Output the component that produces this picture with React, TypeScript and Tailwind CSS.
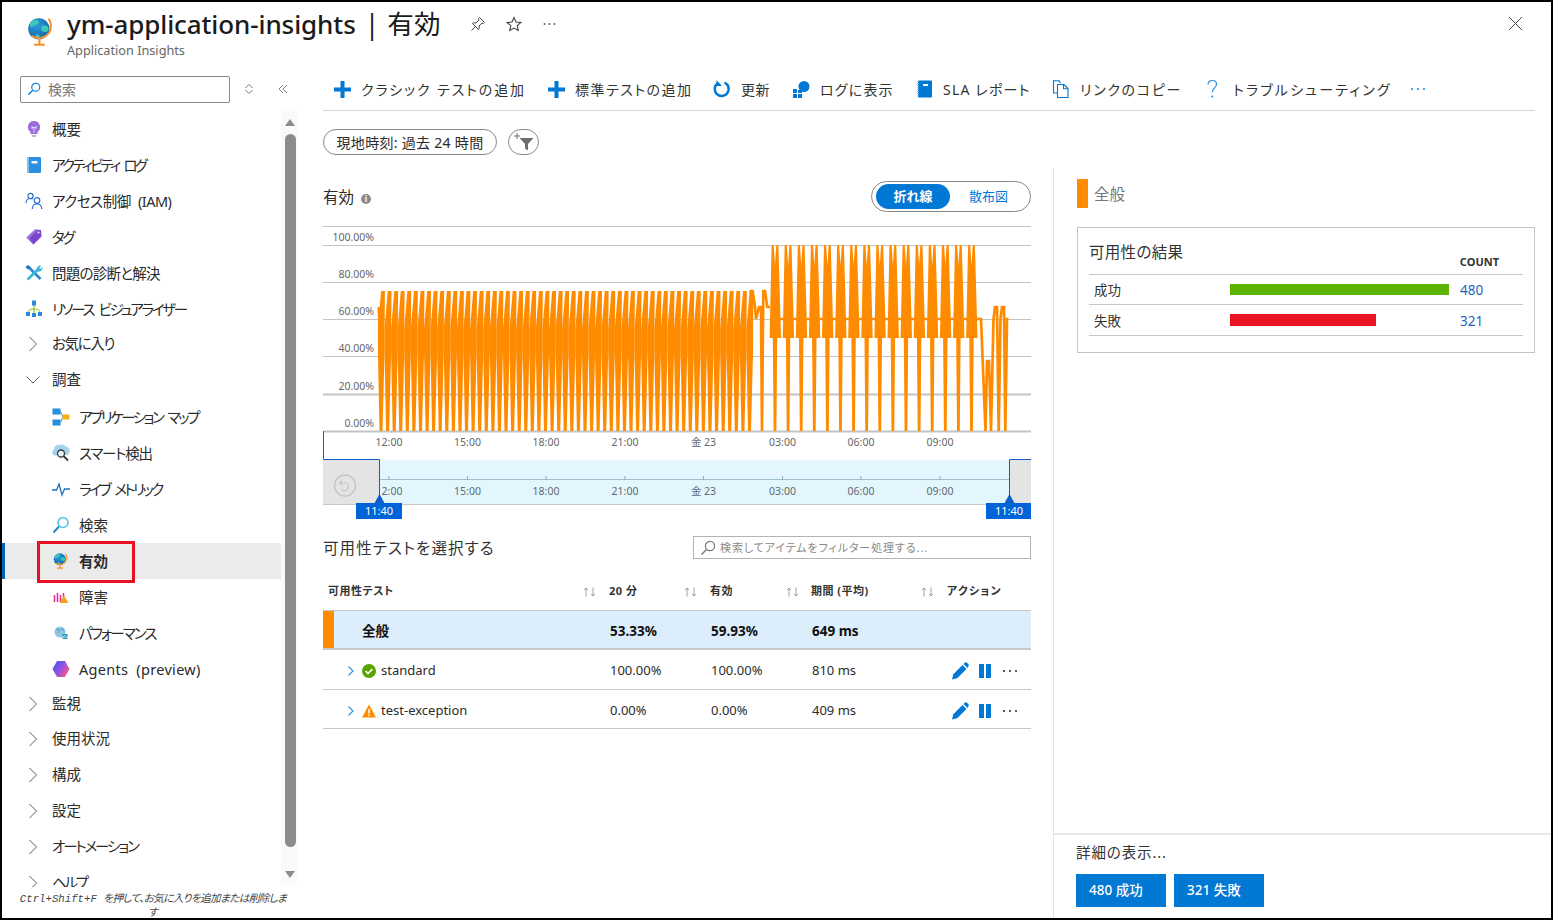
import React from "react";

const Svg = ({ s = 16, w, h, vb = "0 0 16 16", className = "", children }: any) => (
  <svg width={w ?? s} height={h ?? s} viewBox={vb} className={`shrink-0 ${className}`} fill="none">
    {children}
  </svg>
);

const Globe = ({ s = 30, id }: { s?: number; id: string }) => (
  <Svg s={s} vb="0 0 30 30">
    <defs>
      <radialGradient id={id} cx="0.4" cy="0.35" r="0.75">
        <stop offset="0" stopColor="#2a9be0" />
        <stop offset="1" stopColor="#135f9e" />
      </radialGradient>
    </defs>
    <circle cx="13" cy="12" r="10" fill={`url(#${id})`} />
    <path d="M6 5c3-2 6-2 7 0s-2 3-4 4-3 3-4 1 0-4 1-5zM17 9c2-1 4 0 5 2s-1 4-3 4-4-1-4-3 1-3 2-3zM11 17c2 0 3 1 3 3s-2 2-3 1-2-4 0-4z" fill="#39c9b8" />
    <path d="M22 2.500c3.500 4.500 3 11-1 15-4 3.800-10 4.200-14.500 1.300" stroke="#f7902a" strokeWidth="1.800" />
    <path d="M13.500 22v4M8.500 27h10" stroke="#f7902a" strokeWidth="2" />
  </Svg>
);

const Chevron = ({ down = false }: { down?: boolean }) => (
  <Svg s={16} className="text-[#5c5c5c]">
    {down ? (
      <path d="M1.500 4.500 8 11l6.500-6.500" stroke="currentColor" strokeWidth="1" />
    ) : (
      <path d="M4.500 1 11.500 8l-7 7" stroke="currentColor" strokeWidth="1" />
    )}
  </Svg>
);

const SearchIco = ({ color = "#0078d4", s = 14 }: { color?: string; s?: number }) => (
  <Svg s={s}>
    <circle cx="10" cy="6" r="4.600" stroke={color} strokeWidth="1.200" />
    <path d="M6.500 9.500 1.500 14.500" stroke={color} strokeWidth="1.500" />
  </Svg>
);

const icons: Record<string, React.ReactNode> = {
  bulb: (
    <Svg s={18} vb="0 0 18 18">
      <path d="M9 1a6 6 0 0 1 3.500 10.900V14h-7v-2.100A6 6 0 0 1 9 1z" fill="#9a6ce0" />
      <path d="M7 6v3M11 6v3M7 7.500h4M9 7.500V13" stroke="#e6dcf8" strokeWidth="0.900" />
      <path d="M6.500 15h5l-1 2h-3z" fill="#b6b6bc" />
    </Svg>
  ),
  book: (
    <Svg s={18} vb="0 0 18 18">
      <rect x="2" y="1" width="14" height="16" rx="1" fill="#2d8fdf" />
      <rect x="2" y="1" width="2" height="16" fill="#7cc0f2" />
      <rect x="6.500" y="5" width="6" height="2.500" fill="#f2f8fd" />
    </Svg>
  ),
  users: (
    <Svg s={18} vb="0 0 18 18">
      <circle cx="5.500" cy="4" r="2.600" stroke="#2a6fd0" strokeWidth="1.200" />
      <path d="M1 11c0-3 2-4.500 4.500-4.500 1 0 1.700.2 2.300.6" stroke="#2a6fd0" strokeWidth="1.200" />
      <circle cx="12" cy="8.500" r="2.800" stroke="#2a6fd0" strokeWidth="1.200" />
      <path d="M7.300 17c0-3 2-5 4.700-5s4.700 2 4.700 5" stroke="#2a6fd0" strokeWidth="1.200" />
    </Svg>
  ),
  tag: (
    <Svg s={18} vb="0 0 18 18">
      <path d="M1.500 9.500 10 1.500l6 .5.500 6.500-8 8z" fill="#7b45c9" />
      <path d="M1.500 9.500 10 1.500l3 .2-8.500 8.500 4 6.300z" fill="#9b73de" />
      <circle cx="13.500" cy="4.500" r="1.100" fill="#e9def8" />
    </Svg>
  ),
  tools: (
    <Svg s={18} vb="0 0 18 18">
      <path d="M3 2.500 15.500 15" stroke="#2f87d8" strokeWidth="2.600" />
      <path d="M1.500 1.500l2.500 0 1 3-1.500 1-2.500-1.500z" fill="#1f6fc0" />
      <path d="M13 5.500 2.500 15.500" stroke="#35b6d8" strokeWidth="2.600" />
      <path d="M11.500 5.500c0-2.500 2-4.500 5-4l-2.300 2.300 1 1.200 2.300-2c.4 3-1.800 5-4.500 4.500z" fill="#35b6d8" />
    </Svg>
  ),
  res: (
    <Svg s={18} vb="0 0 18 18">
      <path d="M9 5v4M3 13c0-3 2-4 6-4s6 1 6 4M9 9v5" stroke="#7fba00" strokeWidth="1" />
      <rect x="7" y="0.500" width="4" height="5" fill="#2f87d8" />
      <rect x="1" y="12" width="4" height="4" fill="#2f87d8" />
      <rect x="7" y="13" width="4" height="4" fill="#2f87d8" />
      <rect x="13" y="12" width="4" height="4" fill="#2f87d8" />
    </Svg>
  ),
  map: (
    <Svg s={18} vb="0 0 18 18">
      <rect x="0.500" y="0.500" width="8" height="6" fill="#2392dc" />
      <rect x="0.500" y="11.500" width="8" height="6" fill="#2392dc" />
      <path d="M8.500 3.500 11 9l-2.500 5.500" stroke="#2392dc" strokeWidth="1" />
      <rect x="10.500" y="6.500" width="7" height="5" fill="#fab10f" />
    </Svg>
  ),
  smart: (
    <Svg s={18} vb="0 0 18 18">
      <path d="M3 11.500c-3.500 0-3.500-5-1-6 0-3.500 3-5.500 6-4.500 2-1 5 0 6.500 2 3.500 0 4.500 6 1 8z" fill="#a5d3ea" />
      <circle cx="9" cy="9.500" r="3.500" fill="#e8f4fa" stroke="#3a3a3a" strokeWidth="1.300" />
      <path d="M11.500 12 16 16.500" stroke="#3a3a3a" strokeWidth="1.800" />
    </Svg>
  ),
  live: (
    <Svg s={18} vb="0 0 18 18">
      <path d="M0 10h4.500L7 4l3 11 2.500-6H18" stroke="#1f70b8" strokeWidth="1.300" />
    </Svg>
  ),
  find: (
    <Svg s={18} vb="0 0 18 18">
      <circle cx="11" cy="6.500" r="5" stroke="#4fc3e8" strokeWidth="1.500" />
      <path d="M7 10.500 1.500 16.500" stroke="#1f8ac0" strokeWidth="1.900" />
    </Svg>
  ),
  fail: (
    <Svg s={16}>
      <path d="M1.500 6v7M4.500 4v9M7.500 6v7M10.500 4v4" stroke="#e6298f" strokeWidth="1.500" />
      <path d="M11 6.500 15.500 14h-9z" fill="#f7a11a" />
    </Svg>
  ),
  perf: (
    <Svg s={16}>
      <circle cx="7" cy="7" r="5.500" fill="#8fc7e3" />
      <path d="M3.500 4.500c2-1 3 0 3 1s-2 1-2 2.500M8 4c2 0 3 1 3 2" stroke="#3b8fc0" strokeWidth="1" />
      <rect x="9.500" y="9" width="5" height="5" fill="#2b97b8" />
      <path d="M10.500 13V11M12 13V10M13.500 13v-1.500" stroke="#cfeaf2" strokeWidth="0.800" />
    </Svg>
  ),
  agents: (
    <Svg s={18} vb="0 0 18 18">
      <defs>
        <linearGradient id="ag" x1="0" y1="0" x2="1" y2="0.700">
          <stop offset="0" stopColor="#3a5be8" />
          <stop offset="0.500" stopColor="#8a52e8" />
          <stop offset="1" stopColor="#ff5a8a" />
        </linearGradient>
      </defs>
      <path d="M5 1h8l4.500 8-4.500 8H5L.500 9z" fill="url(#ag)" />
    </Svg>
  ),
};

type Item = { t: string; icon?: string; chev?: "r" | "d"; child?: boolean; h?: string; sel?: boolean; tr?: string };
const items: Item[] = [
  { t: "概要", icon: "bulb" },
  { t: "アクティビティ ログ", icon: "book", tr: "tracking-[-2.8px]" },
  { t: "アクセス制御 (IAM)", icon: "users", tr: "tracking-[-0.5px]" },
  { t: "タグ", icon: "tag", tr: "tracking-[-2.5px]" },
  { t: "問題の診断と解決", icon: "tools", tr: "tracking-[-0.75px]" },
  { t: "リソース ビジュアライザー", icon: "res", tr: "tracking-[-2.3px]" },
  { t: "お気に入り", chev: "r", h: "h-[34px]", tr: "tracking-[-1.4px]" },
  { t: "調査", chev: "d", h: "h-[38px]" },
  { t: "アプリケーション マップ", icon: "map", child: true, tr: "tracking-[-2.5px]" },
  { t: "スマート検出", icon: "smart", child: true, tr: "tracking-[-1.2px]" },
  { t: "ライブ メトリック", icon: "live", child: true, tr: "tracking-[-2.6px]" },
  { t: "検索", icon: "find", child: true },
  { t: "有効", icon: "globe", child: true, sel: true },
  { t: "障害", icon: "fail", child: true },
  { t: "パフォーマンス", icon: "perf", child: true, tr: "tracking-[-1.9px]" },
  { t: "Agents (preview)", icon: "agents", child: true, tr: "tracking-[0.3px]" },
  { t: "監視", chev: "r", h: "h-[34px]" },
  { t: "使用状況", chev: "r" },
  { t: "構成", chev: "r" },
  { t: "設定", chev: "r" },
  { t: "オートメーション", chev: "r", tr: "tracking-[-2.1px]" },
  { t: "ヘルプ", chev: "r", tr: "tracking-[-2.3px]" },
];

const SideRow = ({ it }: { it: Item }) => (
  <div
    className={`relative flex items-center shrink-0 ${it.h ?? "h-[36px]"} ${it.child ? "pl-[50px]" : "pl-[23px]"} ${it.sel ? "bg-[#ebebeb]" : ""}`}
  >
    {it.sel && <div className="absolute left-0 top-0 bottom-0 w-[3px] bg-[#0063b1]" />}
    {it.sel && <div className="absolute left-[35px] top-[-2px] w-[98px] h-[42px] border-[3px] border-[#e81123]" />}
    <span className={`flex justify-center ${it.chev ? "w-[16px] mr-[11px]" : "w-[18px] mr-[9px]"}`}>
      {it.chev ? <Chevron down={it.chev === "d"} /> : it.icon === "globe" ? <Globe s={18} id="gl2" /> : it.icon ? icons[it.icon] : null}
    </span>
    <span className={`${it.chev ? "" : "mt-[1px]"} text-[14.5px] text-[#2a2a2a] whitespace-nowrap [word-spacing:4px] ${it.sel ? "font-bold" : ""} ${it.tr ?? ""}`}>{it.t}</span>
  </div>
);

const Plus = () => (
  <Svg s={19} vb="0 0 19 19">
    <path d="M9.500 1v17M1 9.500h17" stroke="#0078d4" strokeWidth="4" />
  </Svg>
);

const toolbar = [
  { w: "w-[224px]", t: "クラシック テストの追加", gap: "gap-[9px]", tr: "tracking-[1.9px]", i: <Plus />, pl: "pl-[10px]" },
  { w: "w-[166px]", t: "標準テストの追加", gap: "gap-[9px]", tr: "tracking-[1.5px]", i: <Plus /> },
  {
    w: "w-[79px]",
    t: "更新",
    gap: "gap-[10px]",
    tr: "tracking-[0.5px]",
    i: (
      <Svg s={18} vb="0 0 18 18">
        <path d="M11.500 2.600a7 7 0 1 1-6.500.5" stroke="#0078d4" strokeWidth="2.500" />
        <path d="M3.500 0v6H9z" fill="#0078d4" />
      </Svg>
    ),
  },
  {
    w: "w-[124px]",
    t: "ログに表示",
    gap: "gap-[10px]",
    tr: "tracking-[1.2px]",
    i: (
      <Svg s={18} vb="0 0 18 18">
        <circle cx="12" cy="6.500" r="5.500" fill="#0078d4" />
        <rect x="1" y="9" width="4" height="4" fill="#0078d4" />
        <rect x="6" y="10" width="4" height="3" fill="#0078d4" />
        <rect x="1" y="14" width="4" height="4" fill="#0078d4" />
        <rect x="6" y="14" width="4" height="4" fill="#0078d4" />
      </Svg>
    ),
  },
  {
    w: "w-[136px]",
    t: "SLA レポート",
    gap: "gap-[9px]",
    tr: "tracking-[1.2px]",
    i: (
      <Svg s={18} vb="0 0 18 18">
        <rect x="2" y="0.500" width="14" height="17" rx="1" fill="#0078d4" />
        <path d="M2 1v16" stroke="#7cc0f2" strokeWidth="1.500" strokeDasharray="1 1" />
        <rect x="7" y="4" width="5" height="2" fill="#fff" />
      </Svg>
    ),
  },
  {
    w: "w-[151px]",
    t: "リンクのコピー",
    gap: "gap-[10px]",
    tr: "tracking-[1.7px]",
    i: (
      <Svg s={18} vb="0 0 18 18">
        <path d="M6 13H1.500V.800H7l1.500 2" stroke="#0078d4" strokeWidth="1.100" />
        <path d="M5.500 4.500H12l4 4V17.500H5.500z" stroke="#0078d4" strokeWidth="1.100" fill="#fff" />
        <path d="M11.500 4.500v4.300H16" stroke="#0078d4" strokeWidth="1.100" />
      </Svg>
    ),
  },
  {
    w: "w-[206px]",
    t: "トラブルシューティング",
    gap: "gap-[12px]",
    tr: "tracking-[2.2px]",
    i: (
      <Svg w={18} h={20} vb="0 0 18 20">
        <path d="M5 5.500C5 3 7 1.500 9.300 1.500c2.400 0 4.200 1.600 4.200 3.800 0 3.700-4.300 4-4.300 8" stroke="#2b8fe0" strokeWidth="1.200" />
        <circle cx="9.200" cy="17.500" r="1" fill="#2b8fe0" />
      </Svg>
    ),
  },
];

const Dots = ({ c = "#444", w = 18 }: { c?: string; w?: number }) => (
  <Svg w={w} h={6} vb="0 0 18 6">
    <circle cx="3" cy="3" r="1.100" fill={c} />
    <circle cx="9" cy="3" r="1.100" fill={c} />
    <circle cx="15" cy="3" r="1.100" fill={c} />
  </Svg>
);

const SortArrows = () => (
  <Svg w={13} h={10} vb="0 0 13 10" className="text-[#8a8a8a]">
    <path d="M3 9.500V1M1 3l2-2 2 2" stroke="currentColor" strokeWidth="0.800" />
    <path d="M10 .500V9M8 7l2 2 2-2" stroke="currentColor" strokeWidth="0.800" />
  </Svg>
);

const Pencil = () => (
  <Svg s={18} vb="0 0 18 18">
    <path d="M1 17.500l1.300-5.200L11.500 3l4 4-9.300 9.200z" fill="#0078d4" />
    <path d="M12.500 2l1.700-1.500c.5-.4 1-.4 1.400 0l2 2c.4.500.4 1 0 1.400L16.500 6z" fill="#0078d4" />
  </Svg>
);
const Pause = () => (
  <Svg w={12} h={14} vb="0 0 12 14">
    <rect x="0" y="0" width="5" height="14" fill="#0078d4" />
    <rect x="7" y="0" width="5" height="14" fill="#0078d4" />
  </Svg>
);

/* chart geometry, page x/y minus origin (323,226) */
const ox = 323;
const oy = 226;
const P = (x: number, y: number) => `${(x - ox).toFixed(1)},${y - oy}`;

const leftPolys = Array.from({ length: 57 }, (_, i) => {
  const b = 381 + 6.58 * i;
  return [
    P(b - 1.5, 431),
    P(b - 3.1, 350),
    P(b - 3.1, 329),
    P(b + 0.1, 291),
    P(b + 3.9, 291),
    P(b + 3.6, 329),
    P(b + 3.6, 350),
    P(b + 1.5, 431),
  ].join(" ");
});

const startPoly = [
  [377.5, 307],
  [381, 307],
  [381, 340],
  [379.5, 400],
  [378.5, 340],
].map(([x, y]) => P(x, y)).join(" ");

const midLine = [
  [749.3, 431],
  [751, 291],
  [752.7, 291],
  [755, 307],
  [756, 319],
  [759, 307],
  [761, 307],
  [762, 431],
  [763.3, 291],
  [765, 291],
  [767.3, 307],
  [770, 307],
].map(([x, y]) => P(x, y)).join(" ");

const endLine = [
  [971, 319],
  [981, 319],
  [985.5, 431],
  [987, 361],
  [989, 361],
  [991, 431],
  [993.5, 319],
  [995, 307],
  [997, 307],
  [998.7, 431],
  [1000.5, 319],
  [1002, 307],
  [1004, 307],
  [1005.3, 431],
  [1007, 319],
  [1008.5, 319],
].map(([x, y]) => P(x, y)).join(" ");

const blocks = Array.from({ length: 16 }, (_, i) => {
  const b = 775 + 13.1 * i;
  return [
    P(b - 5, 319),
    P(b - 3.4, 245),
    P(b - 1.3, 245),
    P(b, 265),
    P(b + 1.3, 245),
    P(b + 3.4, 245),
    P(b + 5.5, 319),
    P(b + 6, 338),
    P(b + 2.2, 338),
    P(b + 1.4, 431),
    P(b - 1.4, 431),
    P(b - 2.2, 338),
    P(b - 5.4, 338),
  ].join(" ");
});

const grid: [number, number][] = [
  [226, 1.2],
  [245, 1.2],
  [282, 1.2],
  [319, 1.2],
  [356, 1.2],
  [394, 2],
  [431, 2],
];
const yLabels: [string, number][] = [
  ["100.00%", 241],
  ["80.00%", 278],
  ["60.00%", 315],
  ["40.00%", 352],
  ["20.00%", 390],
  ["0.00%", 427],
];
const xLabels: [string, number][] = [
  ["12:00", 389],
  ["15:00", 467.5],
  ["18:00", 546],
  ["21:00", 625],
  ["金 23", 703.5],
  ["03:00", 782.5],
  ["06:00", 861],
  ["09:00", 940],
];

const Chart = () => (
  <svg width={708} height={295} viewBox="0 0 708 295" className="block">
    <rect x={57} y={234} width={630} height={45} fill="#e3f6fd" />
    {grid.map(([y, w]) => (
      <line key={y} x1={0} x2={708} y1={y - oy + 0.5} y2={y - oy + 0.5} stroke="#c4c4c4" strokeWidth={w} />
    ))}
    <polygon points={startPoly} fill="#ff8c00" />
    {leftPolys.map((p, i) => (
      <polygon key={i} points={p} fill="#ff8c00" />
    ))}
    <polyline points={midLine} stroke="#ff8c00" strokeWidth={2.7} fill="none" />
    {blocks.map((p, i) => (
      <polygon key={i} points={p} fill="#ff8c00" />
    ))}
    <polyline points={endLine} stroke="#ff8c00" strokeWidth={2.7} fill="none" />
    <polyline points={`${P(770, 319)} ${P(978, 319)}`} stroke="#ff8c00" strokeWidth={2.5} fill="none" />
    {yLabels.map(([t, y]) => (
      <text key={t} x={374 - ox} y={y - oy} textAnchor="end" fontSize={10.5} fill="#666">
        {t}
      </text>
    ))}
    {xLabels.map(([t, x]) => (
      <text key={t} x={x - ox} y={446 - oy} textAnchor="middle" fontSize={10.5} fill="#666">
        {t}
      </text>
    ))}
    {/* navigator */}
    <line x1={57} x2={686} y1={253.5} y2={253.5} stroke="#a3bfcc" />
    {xLabels.map(([t, x]) => (
      <g key={t}>
        <line x1={x - ox} x2={x - ox} y1={250} y2={254} stroke="#8faebc" />
        <text x={x - ox} y={495 - oy} textAnchor="middle" fontSize={10.5} fill="#5f6b70">
          {t}
        </text>
      </g>
    ))}
    <rect x={0} y={233.5} width={56.5} height={45} fill="#e4e4e4" />
    <rect x={687} y={233.5} width={21} height={45} fill="#e4e4e4" />
    <line x1={0} x2={708} y1={278.5} y2={278.5} stroke="#c8c8c8" />
    <path d="M.5 205V233.500H56.500V278" stroke="#0f5fc7" fill="none" />
    <path d="M708 233.500H686.500V278" stroke="#0f5fc7" fill="none" />
    <circle cx={22} cy={259.5} r={10.5} stroke="#c6c6c6" strokeWidth={1.5} fill="none" />
    <path d="M19 254.500l-2.500 2.500 2.500 2.500M17 257h6c3 0 3 7-1 7.500-2 .2-3-.5-3.500-1" stroke="#c6c6c6" strokeWidth={1.2} fill="none" />
    <path d="M51 278l5.500-10 5.500 10z" fill="#0f5fc7" />
    <path d="M681 278l5.500-10 5.500 10z" fill="#0f5fc7" />
    <rect x={33} y={277} width={46} height={16} fill="#0063d8" />
    <rect x={663} y={277} width={45} height={16} fill="#0063d8" />
    <text x={56} y={289} textAnchor="middle" fontSize={11} fill="#fff">
      11:40
    </text>
    <text x={686} y={289} textAnchor="middle" fontSize={11} fill="#fff">
      11:40
    </text>
  </svg>
);

const Actions = () => (
  <div className="flex items-center">
    <Pencil />
    <span className="ml-[10px]">
      <Pause />
    </span>
    <span className="ml-[10px]">
      <Dots c="#333" />
    </span>
  </div>
);

const Row2 = ({ ico, name, a, b, c, h }: any) => (
  <div className={`grid grid-cols-[287px_101px_101px_139px_80px] items-center ${h} border-b border-[#c8c8c8] text-[13px] text-[#2b2b2b]`}>
    <div className="flex items-center pl-[22px]">
      <Svg w={12} h={12} vb="0 0 12 12" className="mr-[5px]">
        <path d="M3.500 1.500 8 6l-4.500 4.500" stroke="#2b8fe0" strokeWidth="1.100" />
      </Svg>
      {ico}
      <span className="ml-[5px]">{name}</span>
    </div>
    <div>{a}</div>
    <div>{b}</div>
    <div>{c}</div>
    <Actions />
  </div>
);

export default function App() {
  return (
    <div className="w-[1553px] h-[920px] border-2 border-black bg-white overflow-hidden flex flex-col text-[#2b2b2b] [font-family:'Noto_Sans','Noto_Sans_CJK_JP',sans-serif] [font-feature-settings:'palt']">
      {/* header */}
      <div className="h-[64px] shrink-0 flex items-start relative pl-[23px]">
        <div className="mt-[14px] mr-[10px]">
          <Globe s={32} id="gl1" />
        </div>
        <div className="flex flex-col">
          <div className="flex items-center h-[44px]">
            <span className="text-[26px] font-medium leading-none text-[#1b1b1b] tracking-[-0.1px]">ym-application-insights</span>
            <span className="text-[26.6px] leading-none text-[#1b1b1b] ml-[9px]">|</span>
            <span className="text-[26.6px] leading-none text-[#1b1b1b] ml-[8px]">有効</span>
            <span className="ml-[29px]">
              <Svg s={16}>
                <path d="M9.500 1.500 14.500 6.500 13.500 7.500 12 7 9 10c.5 1.500.2 2.500-.5 3.500L2.500 7.500C3.500 6.800 4.500 6.500 6 7l3-3-.5-1.500zM5.500 10.500 1.500 14.500" stroke="#444" strokeWidth="1" />
              </Svg>
            </span>
            <span className="ml-[20px]">
              <Svg s={16}>
                <path d="M8 1.500l2 4.500 4.800.5-3.600 3.200 1 4.800L8 12.100l-4.200 2.400 1-4.800L1.200 6.500 6 6z" stroke="#444" strokeWidth="1.100" />
              </Svg>
            </span>
            <span className="ml-[20px]">
              <Dots c="#555" w={15} />
            </span>
          </div>
          <div className="text-[12.7px] leading-none text-[#666] mt-[-2px]">Application Insights</div>
        </div>
        <div className="absolute right-[28px] top-[14px]">
          <Svg s={15} vb="0 0 15 15">
            <path d="M1 1l13 13M14 1 1 14" stroke="#444" strokeWidth="1" />
          </Svg>
        </div>
      </div>

      <div className="flex flex-1 min-h-0">
        {/* sidebar */}
        <div className="w-[296px] shrink-0 flex flex-col relative">
          <div className="h-[45px] shrink-0 flex items-center pl-[18px] pt-[1px]">
            <div className="w-[210px] h-[27px] border border-[#8a8a8a] rounded-[2px] flex items-center pl-[6px]">
              <SearchIco />
              <span className="ml-[7px] text-[14px] text-[#767676]">検索</span>
            </div>
            <span className="ml-[14px]">
              <Svg s={10} vb="0 0 10 10">
                <path d="M1.500 4 5 .500 8.500 4M1.500 6 5 9.500 8.500 6" stroke="#555" strokeWidth="0.800" />
              </Svg>
            </span>
            <span className="ml-[24px]">
              <Svg s={10} vb="0 0 10 10">
                <path d="M5 1 1 5l4 4M9 1 5 5l4 4" stroke="#666" strokeWidth="0.800" />
              </Svg>
            </span>
          </div>
          <div className="flex-1 min-h-0 flex">
            <div className="w-[279px] overflow-hidden">
              {items.map((it) => (
                <SideRow key={it.t} it={it} />
              ))}
            </div>
            <div className="w-[16px] h-[774px] bg-[#fafafa] flex flex-col items-center">
              <div className="mt-[8px] w-0 h-0 ml-[2px] border-l-[5px] border-r-[5px] border-b-[7px] border-l-transparent border-r-transparent border-b-[#8c8c8c]" />
              <div className="mt-[8px] w-[11px] h-[713px] rounded-[6px] bg-[#8c8c8c] ml-[2px]" />
              <div className="mt-[24px] w-0 h-0 ml-[2px] border-l-[5px] border-r-[5px] border-t-[7px] border-l-transparent border-r-transparent border-t-[#8c8c8c]" />
            </div>
          </div>
          <div className="absolute left-0 right-0 bottom-0 h-[31px] bg-white">
            <div className="w-[300px] pt-[5px] pl-[14px] pr-[12px] text-center text-[10.7px] leading-[14px] italic text-[#444] [font-family:'Liberation_Mono','Noto_Sans_CJK_JP',monospace]">
              Ctrl+Shift+F <span className="tracking-[-0.7px]">を押して、お気に入りを追加または削除しま</span> す
            </div>
          </div>
        </div>

        {/* main */}
        <div className="flex-1 min-w-0 flex flex-col pl-[25px]">
          <div className="h-[45px] mr-[16px] shrink-0 border-b border-[#d6d6d6] flex items-center pt-[2px]">
            {toolbar.map((b) => (
              <div key={b.t} className={`flex items-center ${b.w} ${b.gap} ${b.pl ?? ""} shrink-0`}>
                {b.i}
                <span className={`text-[14px] text-[#333] whitespace-nowrap ${b.tr}`}>{b.t}</span>
              </div>
            ))}
            <Dots c="#2b8fe0" />
          </div>

          <div className="flex items-center mt-[18px] shrink-0 gap-[11px]">
            <div className="w-[174px] h-[26px] rounded-full border border-[#8a8a8a] flex items-center justify-center text-[14px] tracking-[0.3px] text-[#2b2b2b]">
              現地時刻: 過去 24 時間
            </div>
            <div className="w-[31px] h-[26px] rounded-full border border-[#8a8a8a] flex items-center justify-center">
              <Svg s={22} vb="0 0 22 22">
                <path d="M6.500 7h14l-5.500 6v6.500l-3-2V13z" fill="#6e6e6e" />
                <path d="M4 2v6M1 5h6" stroke="#6e6e6e" strokeWidth="1" />
              </Svg>
            </div>
          </div>

          <div className="flex flex-1 min-h-0 mt-[13px]">
            {/* left column */}
            <div className="w-[708px] shrink-0">
              <div className="flex items-center justify-between h-[31px] mt-[13px]">
                <div className="flex items-center gap-[6px]">
                  <span className="text-[15.5px] mt-[3px] text-[#2b2b2b]">有効</span>
                  <span className="w-[10px] h-[10px] mt-[4px] ml-[1px] rounded-full bg-[#8a8a8a] text-white text-[8px] leading-[10px] text-center font-bold">i</span>
                </div>
                <div className="w-[160px] h-[31px] rounded-full border border-[#8a8a8a] flex items-center pl-[4px]">
                  <div className="w-[74px] h-[25px] rounded-full bg-[#0078d4] text-white text-[13px] font-bold flex items-center justify-center">折れ線</div>
                  <div className="ml-[19px] text-[13px] text-[#0078d4]">散布図</div>
                </div>
              </div>
              <div className="mt-[14px]">
                <Chart />
              </div>
              <div className="flex items-center justify-between h-[23px] mt-[15px]">
                <span className="text-[15.5px] mt-[2px] text-[#333] tracking-[1.1px]">可用性テストを選択する</span>
                <div className="w-[338px] h-[23px] border border-[#b4b4b4] flex items-center pl-[6px]">
                  <SearchIco color="#777" s={16} />
                  <span className="ml-[4px] mt-[2px] text-[11px] tracking-[0.9px] text-[#8a8a8a]">検索してアイテムをフィルター処理する...</span>
                </div>
              </div>
              <div className="mt-[12px] h-[39px] pt-[2px] grid grid-cols-[286px_101px_101px_136px_84px] items-center text-[11px] tracking-[0.5px] font-bold text-[#333]">
                <div className="flex items-center justify-between pl-[5px] pr-[13px]">
                  <span>可用性テスト</span>
                  <SortArrows />
                </div>
                <div className="flex items-center justify-between pr-[13px]">
                  <span>20 分</span>
                  <SortArrows />
                </div>
                <div className="flex items-center justify-between pr-[12px]">
                  <span>有効</span>
                  <SortArrows />
                </div>
                <div className="flex items-center justify-between pr-[13px]">
                  <span>期間 (平均)</span>
                  <SortArrows />
                </div>
                <div className="tracking-[1.2px]">アクション</div>
              </div>
              <div className="grid grid-cols-[287px_101px_101px_219px] items-center h-[40px] bg-[#dcedfb] border-t border-[#c8c8c8] border-b-2 text-[13.5px] font-bold text-[#111]">
                <div className="flex items-center h-full">
                  <div className="w-[11px] h-full bg-[#ff8c00]" />
                  <span className="ml-[28px] mt-[4px]">全般</span>
                </div>
                <div className="mt-[4px]">53.33%</div>
                <div className="mt-[4px]">59.93%</div>
                <div className="mt-[4px]">649 ms</div>
              </div>
              <Row2
                h="h-[40px] pt-[2px]"
                ico={
                  <Svg s={14} vb="0 0 14 14">
                    <circle cx="7" cy="7" r="7" fill="#57a300" />
                    <path d="M3.500 7 6 9.500 10.500 5" stroke="#fff" strokeWidth="1.600" />
                  </Svg>
                }
                name="standard"
                a="100.00%"
                b="100.00%"
                c="810 ms"
              />
              <Row2
                h="h-[39px] pt-[3px]"
                ico={
                  <Svg s={14} vb="0 0 14 14">
                    <path d="M7 .500 14 13.500H0z" fill="#ff8c00" />
                    <path d="M7 5v4.500M7 10.500v1.500" stroke="#fff" strokeWidth="1.500" />
                  </Svg>
                }
                name="test-exception"
                a="0.00%"
                b="0.00%"
                c="409 ms"
              />
            </div>

            {/* right panel */}
            <div className="flex-1 min-w-0 ml-[22px] border-l border-[#e3e3e3] flex flex-col">
              <div className="flex-1 min-h-0 pl-[23px] pr-[16px] pt-[11px]">
                <div className="flex items-center h-[29px]">
                  <div className="w-[11px] h-[29px] bg-[#ff8c00]" />
                  <span className="ml-[6px] mt-[2px] text-[15.5px] text-[#777]">全般</span>
                </div>
                <div className="mt-[19px] h-[126px] border-[1.5px] border-[#c4c4c4] px-[11px]">
                  <div className="flex justify-between h-[47px] border-b border-[#c8c8c8]">
                    <span className="text-[15.5px] text-[#333] mt-[13px] tracking-[0.3px]">可用性の結果</span>
                    <span className="text-[11px] font-bold text-[#333] mt-[26px] mr-[24px]">COUNT</span>
                  </div>
                  <div className="flex items-center h-[30px] border-b border-[#c8c8c8] text-[13.5px]">
                    <span className="w-[141px] pl-[5px] mt-[2px] text-[#333]">成功</span>
                    <div className="w-[219px] h-[11px] bg-[#5db300]" />
                    <span className="ml-[11px] mt-[2px] text-[#2266b8]">480</span>
                  </div>
                  <div className="flex items-center h-[31px] border-b border-[#c8c8c8] text-[13.5px]">
                    <span className="w-[141px] pl-[5px] mt-[2px] text-[#333]">失敗</span>
                    <div className="w-[146px] h-[12px] bg-[#ea1324]" />
                    <span className="ml-[84px] mt-[2px] text-[#2266b8]">321</span>
                  </div>
                </div>
              </div>
              <div className="h-[85px] shrink-0 border-t-2 border-[#e8e8e8] pl-[22px] pt-[6px]">
                <div className="text-[14.5px] leading-[22px] tracking-[0.9px] text-[#333]">詳細の表示...</div>
                <div className="flex gap-[8px] mt-[11px]">
                  <div className="w-[90px] h-[33px] bg-[#0078d4] text-white text-[13.5px] font-medium flex items-center pl-[13px]">480 成功</div>
                  <div className="w-[90px] h-[33px] bg-[#0078d4] text-white text-[13.5px] font-medium flex items-center pl-[13px]">321 失敗</div>
                </div>
              </div>
            </div>
          </div>
        </div>
      </div>
    </div>
  );
}
